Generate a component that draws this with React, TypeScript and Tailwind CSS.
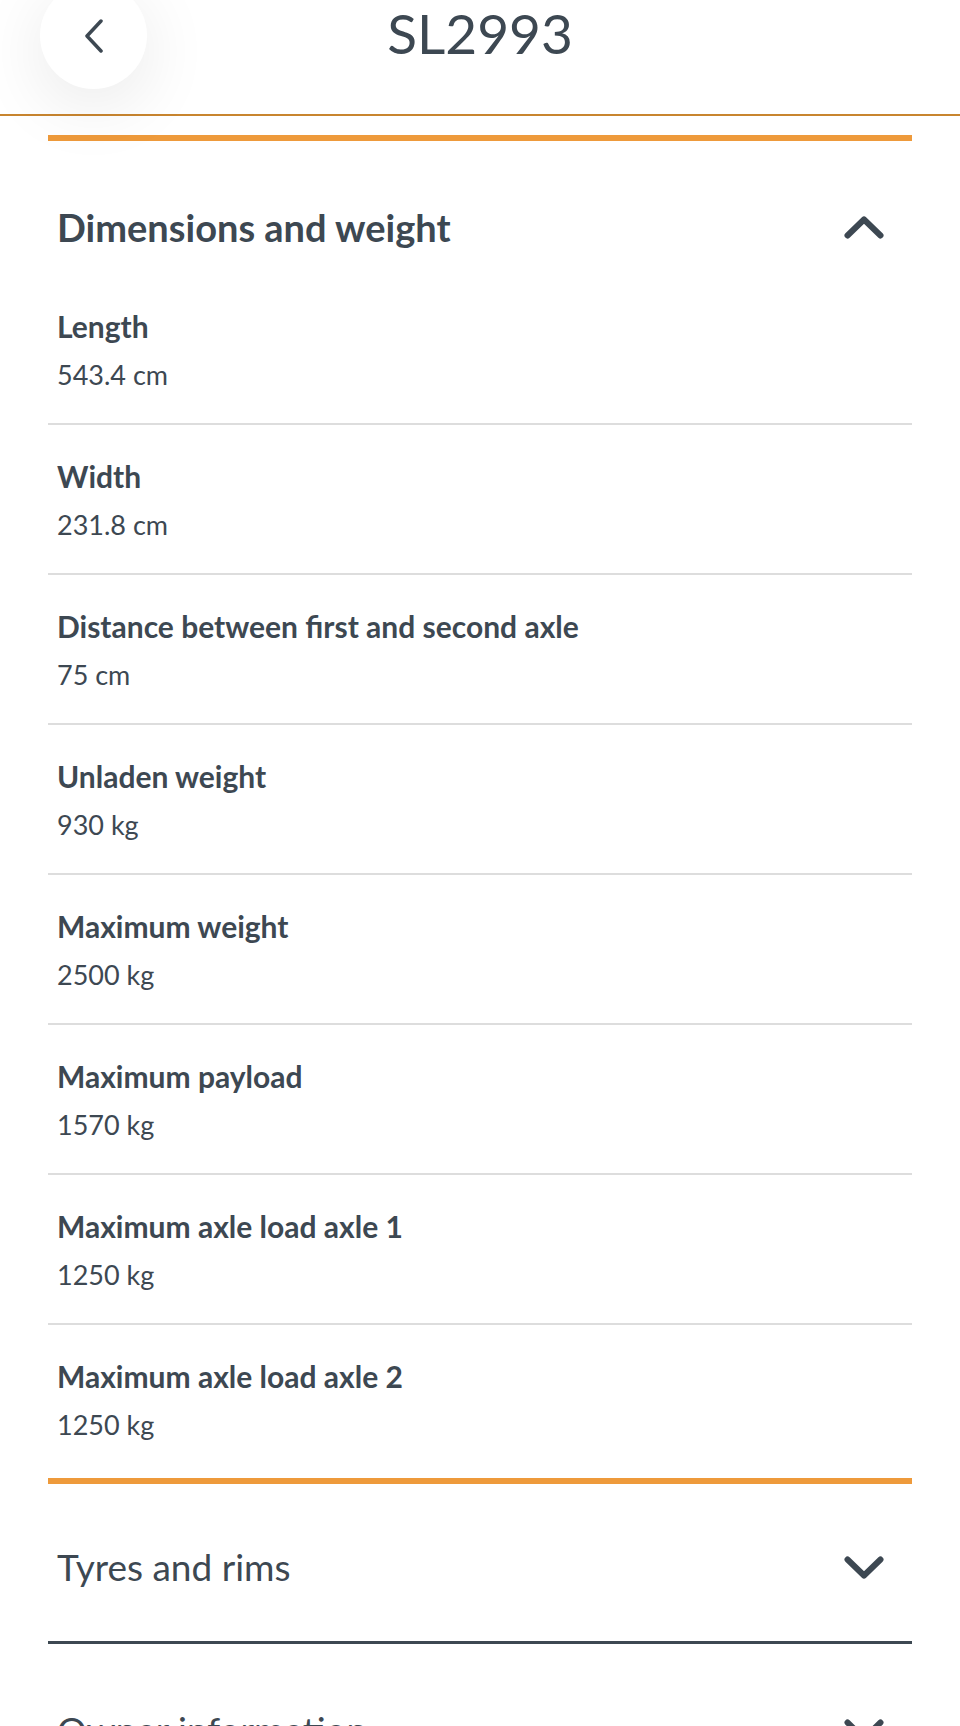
import type { ReactNode } from "react";

type Spec = { label: string; value: string };

const DIMENSIONS: Spec[] = [
  { label: "Length", value: "543.4 cm" },
  { label: "Width", value: "231.8 cm" },
  { label: "Distance between first and second axle", value: "75 cm" },
  { label: "Unladen weight", value: "930 kg" },
  { label: "Maximum weight", value: "2500 kg" },
  { label: "Maximum payload", value: "1570 kg" },
  { label: "Maximum axle load axle 1", value: "1250 kg" },
  { label: "Maximum axle load axle 2", value: "1250 kg" },
];

const Chevron = ({ up }: { up?: boolean }) => (
  <svg width="40" height="23" viewBox="0 0 40 23" fill="none" className="shrink-0">
    <polyline
      points={up ? "3.5,19.5 20,3.5 36.5,19.5" : "3.5,3.5 20,19.5 36.5,3.5"}
      stroke="#3d4852"
      strokeWidth="6"
      strokeLinecap="round"
      strokeLinejoin="round"
    />
  </svg>
);

const SectionHeader = ({
  title,
  open,
  className = "pt-[64px]",
}: {
  title: string;
  open?: boolean;
  className?: string;
}) => (
  <div className={`flex items-center justify-between pl-[9px] pr-[28px] ${className}`}>
    <h2
      className={`leading-[44px] text-[#3d4852] ${
        open ? "text-[38px] font-bold" : "text-[37px] font-normal"
      }`}
    >
      {title}
    </h2>
    <Chevron up={open} />
  </div>
);

const SpecRow = ({ spec, last }: { spec: Spec; last?: boolean }) => (
  <div
    className={`flex flex-col gap-[15px] px-[9px] pt-[34px] ${
      last ? "pb-[36px]" : "pb-[31px] border-b-2 border-[#dddddd]"
    }`}
  >
    <span className="text-[30px] leading-[34px] font-bold text-[#3d4852]">{spec.label}</span>
    <span className="text-[27px] leading-[34px] text-[#3d4852]">{spec.value}</span>
  </div>
);

const Section = ({ children, className }: { children: ReactNode; className: string }) => (
  <section className={className}>{children}</section>
);

export default function App() {
  return (
    <div
      className="h-[1726px] overflow-hidden bg-white"
      style={{ fontFamily: "Lato, 'Open Sans', sans-serif" }}
    >
      {/* top bar with back button and registration number */}
      <header className="relative z-10 h-[116px] bg-white border-b-2 border-[#c8852f]">
        <div className="grid grid-cols-[1fr_auto_1fr] items-start">
          <div className="pl-[40px]">
            <button className="-mt-[18px] flex h-[107px] w-[107px] items-center justify-center rounded-full bg-white shadow-[0_16px_70px_rgba(0,0,0,0.09)]">
              <svg width="20" height="34" viewBox="0 0 20 34" fill="none">
                <polyline
                  points="17,2 3,17 17,32"
                  stroke="#3d4852"
                  strokeWidth="3.5"
                  strokeLinecap="round"
                  strokeLinejoin="round"
                />
              </svg>
            </button>
          </div>
          <h1 className="text-[55px] leading-[66px] text-[#3d4852]">SL2993</h1>
          <div />
        </div>
      </header>

      <main className="mx-[48px] pt-[19px]">
        <Section className="border-t-[6px] border-[#ee9a3b]">
          <SectionHeader title="Dimensions and weight" open />
          <div className="mt-[26px]">
            {DIMENSIONS.map((spec, i) => (
              <SpecRow key={spec.label} spec={spec} last={i === DIMENSIONS.length - 1} />
            ))}
          </div>
        </Section>

        <Section className="border-t-[6px] border-[#ee9a3b] border-b-[3px] border-b-[#3d4852] pb-[52px]">
          <SectionHeader title="Tyres and rims" className="pt-[61px]" />
        </Section>

        <Section className="border-b-[3px] border-[#3d4852] pb-[52px]">
          <SectionHeader title="Owner information" />
        </Section>
      </main>
    </div>
  );
}
